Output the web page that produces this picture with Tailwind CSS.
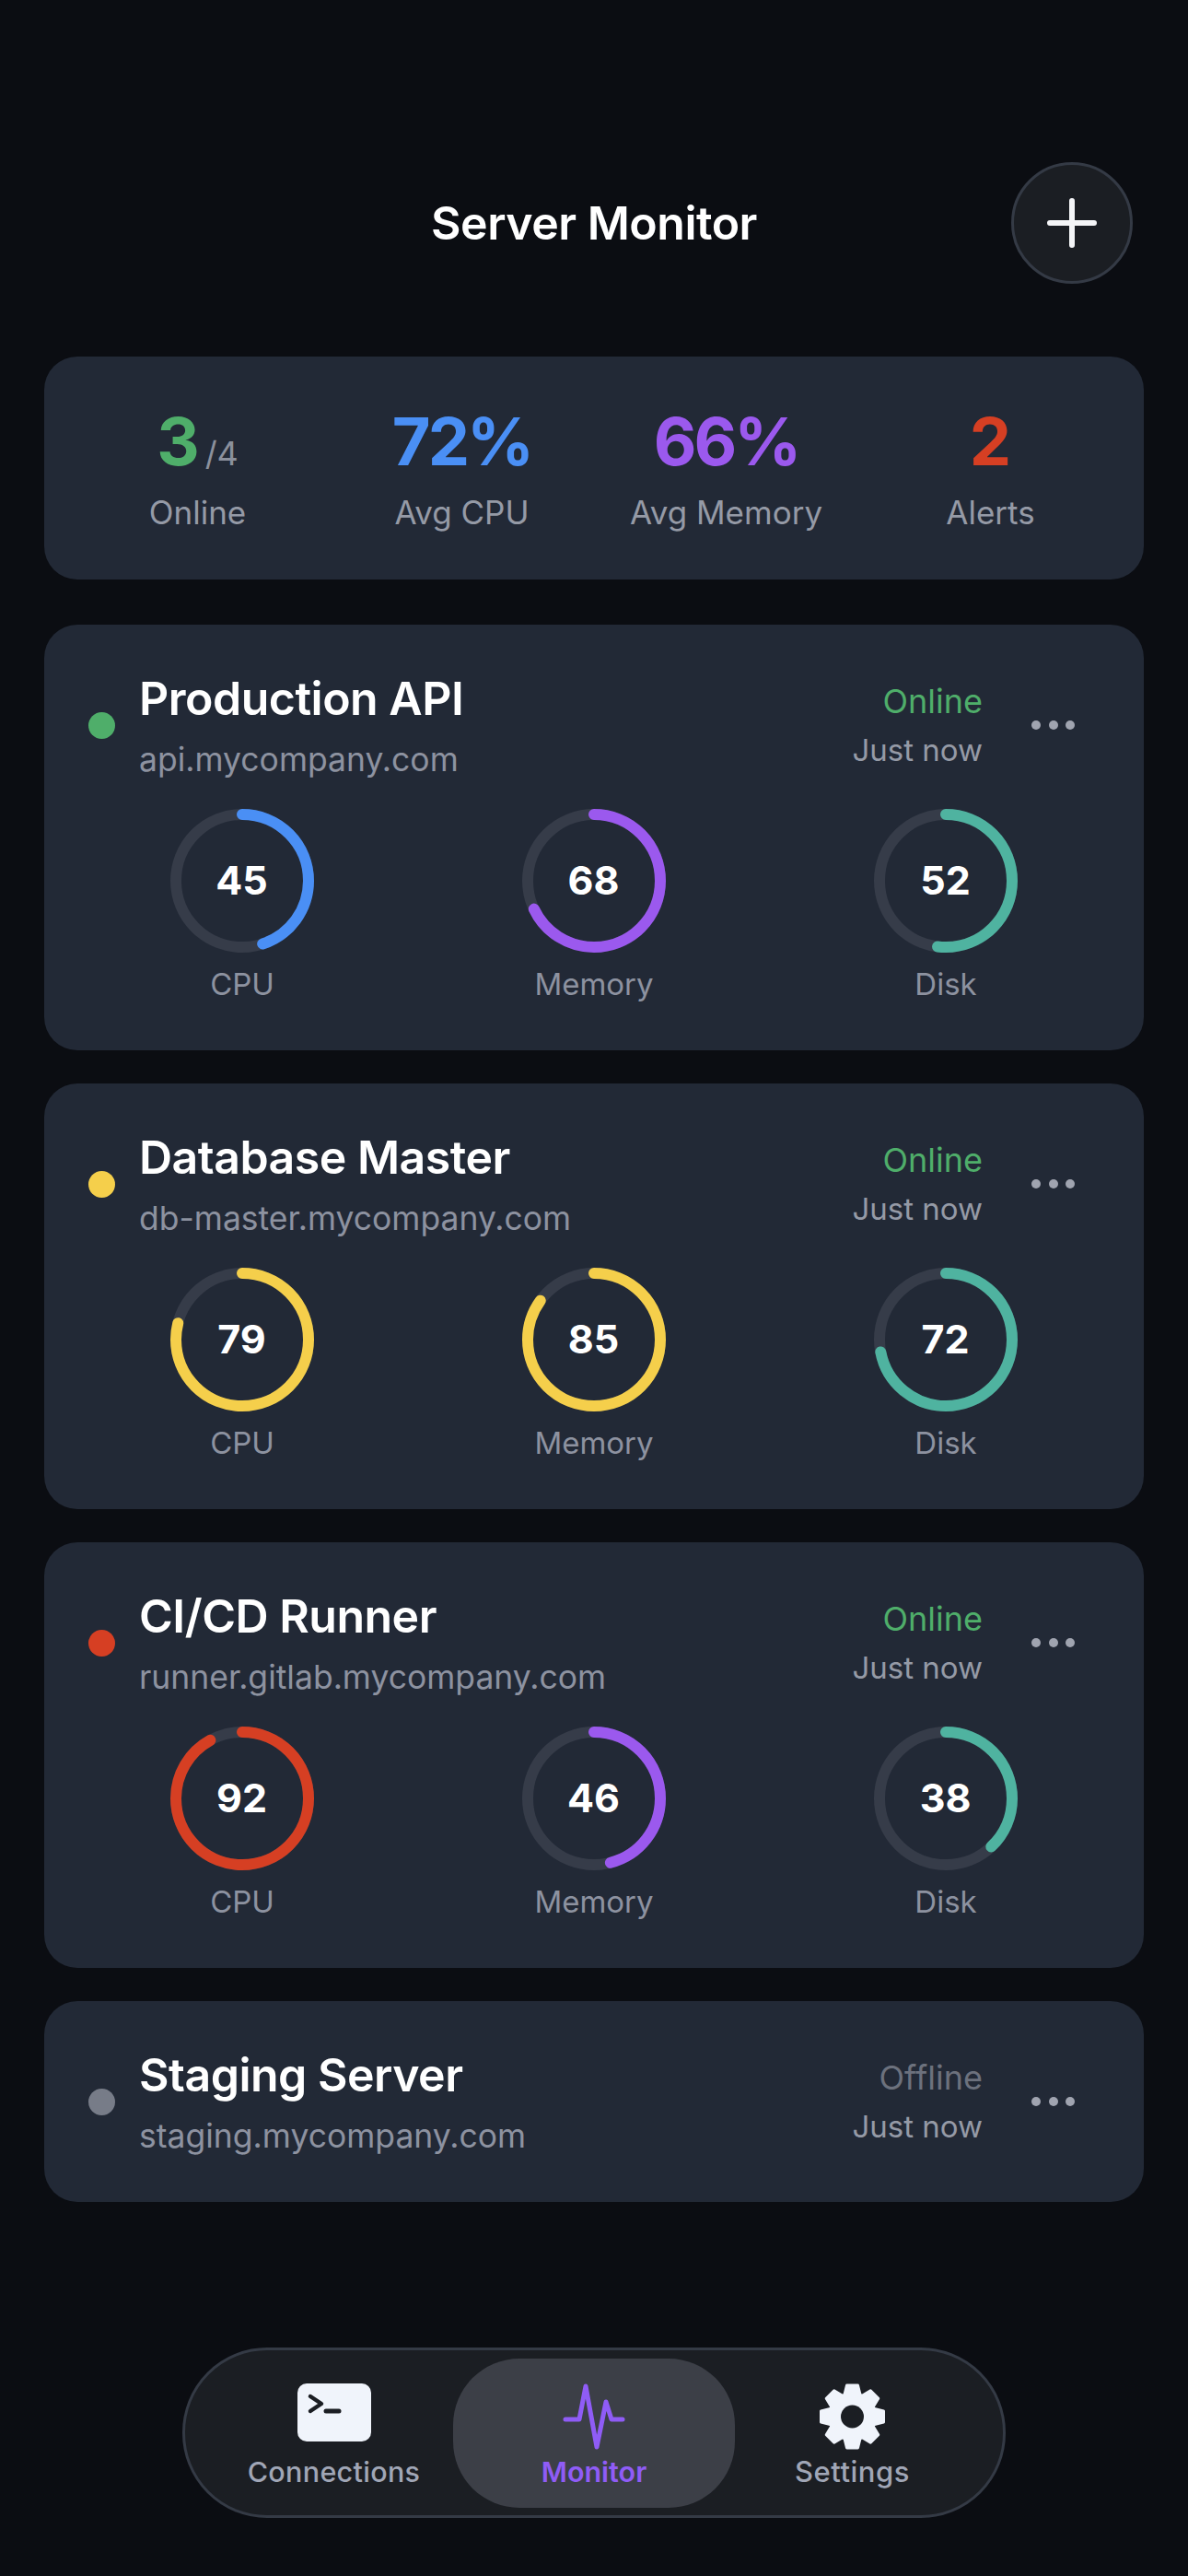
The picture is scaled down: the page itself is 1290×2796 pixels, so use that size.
<!DOCTYPE html>
<html lang="en">
<head>
  <meta charset="UTF-8">
  <meta name="viewport" content="width=device-width, initial-scale=1.0">
  <title>Server Monitor</title>
  <script src="https://cdn.jsdelivr.net/npm/@tailwindcss/browser@4"></script>
</head>
<body class="bg-[#0b0d12] text-white font-['Inter','Liberation_Sans',sans-serif]">
  <div class="relative h-[2796px] w-[1290px] overflow-hidden">
    <main class="px-[48px] pt-[176px]">
      <header class="relative flex h-[132px] items-center justify-center mb-[79px]">
        <h1 class="text-[50px] font-semibold leading-[60px] tracking-[-0.5px]">Server Monitor</h1>
        <button class="absolute right-[12px] top-0 flex h-[132px] w-[132px] items-center justify-center rounded-full border-[3px] border-[#343a45] bg-[#1b1e23]">
          <svg width="60" height="60" viewBox="0 0 60 60" fill="none" stroke="#f4f5f7" stroke-width="6" stroke-linecap="round"><path d="M30 6v48M6 30h48"/></svg>
        </button>
      </header>

      <section class="grid h-[242px] grid-cols-4 rounded-[36px] bg-[#222936] px-[23px] pt-[50px] mb-[49px]">
        <div class="text-center">
          <div class="h-[84px] text-[72px] font-bold leading-[84px]"><span class="text-[#4fae6a]">3</span><span class="ml-[6px] text-[36px] font-normal text-[#8b909c]">/4</span></div>
          <div class="mt-[13px] text-[35px] leading-[44px] text-[#959aa6]">Online</div>
        </div>
        <div class="text-center">
          <div class="h-[84px] text-[72px] font-bold leading-[84px] tracking-[-3px] text-[#4a8ff5]">72%</div>
          <div class="mt-[13px] text-[35px] leading-[44px] text-[#959aa6]">Avg CPU</div>
        </div>
        <div class="text-center">
          <div class="h-[84px] text-[72px] font-bold leading-[84px] tracking-[-3px] text-[#9b59ee]">66%</div>
          <div class="mt-[13px] text-[35px] leading-[44px] text-[#959aa6]">Avg Memory</div>
        </div>
        <div class="text-center">
          <div class="h-[84px] text-[72px] font-bold leading-[84px] text-[#d63f23]">2</div>
          <div class="mt-[13px] text-[35px] leading-[44px] text-[#959aa6]">Alerts</div>
        </div>
      </section>

      <div id="servers" class="flex flex-col gap-[36px]"></div>
    </main>

    <nav class="absolute bottom-[63px] left-[198px] flex h-[185px] w-[894px] items-center rounded-[92px] border-[3px] border-[#343a45] bg-[#1b1e23]">
      <div class="flex h-[162px] w-[291px] flex-col items-center pl-[32px]">
        <div class="mt-[27px] flex h-[72px] items-start">
          <svg width="80" height="63" viewBox="0 0 80 63"><rect width="80" height="63" rx="10" fill="#f0f4fb"/><path d="M14 14l12 8-12 8" fill="none" stroke="#1b1e23" stroke-width="4.5" stroke-linecap="round" stroke-linejoin="round"/><path d="M31 30h14" stroke="#1b1e23" stroke-width="5" stroke-linecap="round"/></svg>
        </div>
        <span class="mt-[6px] text-[30.5px] font-medium leading-[36px] tracking-[0.3px] text-[#a0a6b6]">Connections</span>
      </div>
      <div class="flex h-[162px] w-[306px] flex-col items-center rounded-[72px] bg-[#3c3f47]">
        <div class="mt-[27px] flex h-[72px] items-center">
          <svg width="68" height="72" viewBox="0 0 68 72" fill="none" stroke="#8f5cf6" stroke-width="5" stroke-linecap="round" stroke-linejoin="round"><path d="M3 39h15l7-36 12 66 10-49 6 19h12"/></svg>
        </div>
        <span class="mt-[6px] text-[30.5px] font-semibold leading-[36px] text-[#8f5cf6]">Monitor</span>
      </div>
      <div class="flex h-[162px] flex-1 flex-col items-center pr-[36px]">
        <div class="mt-[27px] flex h-[72px] items-center">
          <svg width="73" height="72" viewBox="0 0 72 72" fill="#f0f4fb" stroke="#f0f4fb" stroke-width="3" stroke-linejoin="round">
            <circle cx="36" cy="36" r="25"/>
            <path d="M30 2h12l4 16h-20z"/>
            <path d="M30 2h12l4 16h-20z" transform="rotate(45 36 36)"/>
            <path d="M30 2h12l4 16h-20z" transform="rotate(90 36 36)"/>
            <path d="M30 2h12l4 16h-20z" transform="rotate(135 36 36)"/>
            <path d="M30 2h12l4 16h-20z" transform="rotate(180 36 36)"/>
            <path d="M30 2h12l4 16h-20z" transform="rotate(225 36 36)"/>
            <path d="M30 2h12l4 16h-20z" transform="rotate(270 36 36)"/>
            <path d="M30 2h12l4 16h-20z" transform="rotate(315 36 36)"/>
            <circle cx="36" cy="36" r="12.5" fill="#1b1e23" stroke="none"/>
          </svg>
        </div>
        <span class="mt-[6px] text-[31px] font-medium leading-[36px] tracking-[0.5px] text-[#a0a6b6]">Settings</span>
      </div>
    </nav>
  </div>

  <script>
    const BLUE = '#4a8ff5', PURPLE = '#9b59ee', TEAL = '#4fb3a0', YELLOW = '#f5cf4b', RED = '#d63f23';
    const servers = [
      { name: 'Production API', host: 'api.mycompany.com', dot: '#4fae6a', status: 'Online',
        metrics: [['CPU', 45, BLUE], ['Memory', 68, PURPLE], ['Disk', 52, TEAL]] },
      { name: 'Database Master', host: 'db-master.mycompany.com', dot: YELLOW, status: 'Online',
        metrics: [['CPU', 79, YELLOW], ['Memory', 85, YELLOW], ['Disk', 72, TEAL]] },
      { name: 'CI/CD Runner', host: 'runner.gitlab.mycompany.com', dot: RED, status: 'Online',
        metrics: [['CPU', 92, RED], ['Memory', 46, PURPLE], ['Disk', 38, TEAL]] },
      { name: 'Staging Server', host: 'staging.mycompany.com', dot: '#777c88', status: 'Offline', metrics: [] }
    ];

    const ring = ([label, value, color]) => `
      <div class="flex flex-col items-center">
        <div class="relative h-[156px] w-[156px]">
          <svg class="-rotate-90" width="156" height="156" viewBox="0 0 156 156" fill="none" stroke-width="12">
            <circle cx="78" cy="78" r="72" stroke="#363c49"/>
            <circle cx="78" cy="78" r="72" stroke="${color}" pathLength="100" stroke-dasharray="${value} 100" stroke-linecap="round"/>
          </svg>
          <span class="absolute inset-0 flex items-center justify-center pb-[1px] pr-[1px] text-[43px] font-bold">${value}</span>
        </div>
        <span class="mt-[13px] text-[33px] leading-[42px] text-[#8d92a0]">${label}</span>
      </div>`;

    document.getElementById('servers').innerHTML = servers.map(s => `
      <article class="rounded-[36px] bg-[#222936] pt-[50px] pb-[50px]">
        <div class="flex h-[118px] items-center pl-[48px] pr-[75px]">
          <span class="h-[29px] w-[29px] rounded-full" style="background:${s.dot}"></span>
          <div class="ml-[26px] flex-1">
            <div class="text-[50px] font-semibold leading-[60px] tracking-[-0.5px]">${s.name}</div>
            <div class="mt-[15px] text-[35.5px] leading-[44px] text-[#8d92a0]">${s.host}</div>
          </div>
          <div class="flex flex-col gap-[9px] text-right leading-[44px]">
            <span class="text-[36px] ${s.status === 'Online' ? 'text-[#4fae6a]' : 'text-[#6c717d]'}">${s.status}</span>
            <span class="text-[33px] text-[#959aa6]">Just now</span>
          </div>
          <div class="ml-[53px] flex gap-[8.5px]">
            <i class="h-[10px] w-[10px] rounded-full bg-[#a0a4b0]"></i><i class="h-[10px] w-[10px] rounded-full bg-[#a0a4b0]"></i><i class="h-[10px] w-[10px] rounded-full bg-[#a0a4b0]"></i>
          </div>
        </div>
        ${s.metrics.length ? `<div class="mt-[32px] grid grid-cols-3 px-[24px] pb-[1px]">${s.metrics.map(ring).join('')}</div>` : ''}
      </article>`).join('');
  </script>
</body>
</html>
